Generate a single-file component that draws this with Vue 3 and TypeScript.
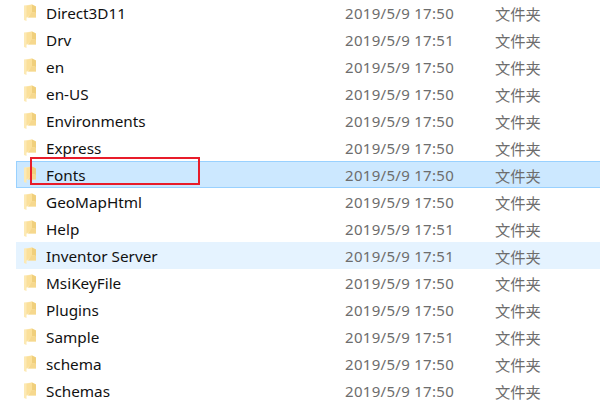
<script setup lang="ts">
interface Row { name: string; time: string; state?: string }
const rows: Row[] = [
  { name: 'Direct3D11', time: '17:50' },
  { name: 'Drv', time: '17:51' },
  { name: 'en', time: '17:50' },
  { name: 'en-US', time: '17:50' },
  { name: 'Environments', time: '17:50' },
  { name: 'Express', time: '17:50' },
  { name: 'Fonts', time: '17:50', state: 'selected' },
  { name: 'GeoMapHtml', time: '17:50' },
  { name: 'Help', time: '17:51' },
  { name: 'Inventor Server', time: '17:51', state: 'hovered' },
  { name: 'MsiKeyFile', time: '17:50' },
  { name: 'Plugins', time: '17:50' },
  { name: 'Sample', time: '17:51' },
  { name: 'schema', time: '17:50' },
  { name: 'Schemas', time: '17:50' },
]
</script>

<template>
  <div class="page">
    <div class="list">
      <div v-for="r in rows" :key="r.name" class="row" :class="r.state">
        <svg class="icon" width="13" height="18" viewBox="0 0 13 18">
          <path d="M0 1.5 L8 0.5 L12 2.5 L12 13.5 L2.5 13.5 L2.5 17 L0 16 Z" fill="#fce9b4" />
          <path d="M2.5 2 L8 0.5 L8 9 L2.5 13.5 Z" fill="#fbe09a" />
          <path d="M8 0.5 L12 2.5 L12 9 L8 8 Z" fill="#f0cf7c" />
          <path d="M8 8 L12 9 L12 13.5 L4 13.5 Z" fill="#f6d88e" />
        </svg>
        <span class="name">{{ r.name }}</span>
        <span class="date">2019/5/9 {{ r.time }}</span>
        <span class="type">文件夹</span>
      </div>
    </div>
    <div class="mark"></div>
  </div>
</template>

<style>
html, body { margin: 0; background: #fff; overflow: hidden; }
</style>

<style scoped>
.page {
  position: relative;
  width: 600px;
  height: 400px;
  overflow: hidden;
  background: #fff;
  font-family: "Noto Sans", "Noto Sans CJK SC", sans-serif;
  font-size: 15.3px;
}
.list {
  margin-top: -1px;
  padding-left: 16px;
}
.row {
  display: flex;
  align-items: center;
  height: 27px;
  box-sizing: border-box;
}
.row.selected {
  background: #cce8ff;
  border: 1px solid #99d1ff;
  border-right: none;
}
.row.hovered { background: #e5f3ff; }
.icon { margin-left: 8px; flex: none; }
.selected .icon { margin-left: 7px; }
.name { margin-left: 9px; width: 299px; color: #111; }
.date { width: 150px; color: #6d6d6d; font-size: 15px; letter-spacing: 0.3px; }
.type { color: #6d6d6d; }
.mark {
  position: absolute;
  left: 30px;
  top: 157px;
  width: 170px;
  height: 28px;
  box-sizing: border-box;
  border: 2px solid #e81c2a;
}
</style>
